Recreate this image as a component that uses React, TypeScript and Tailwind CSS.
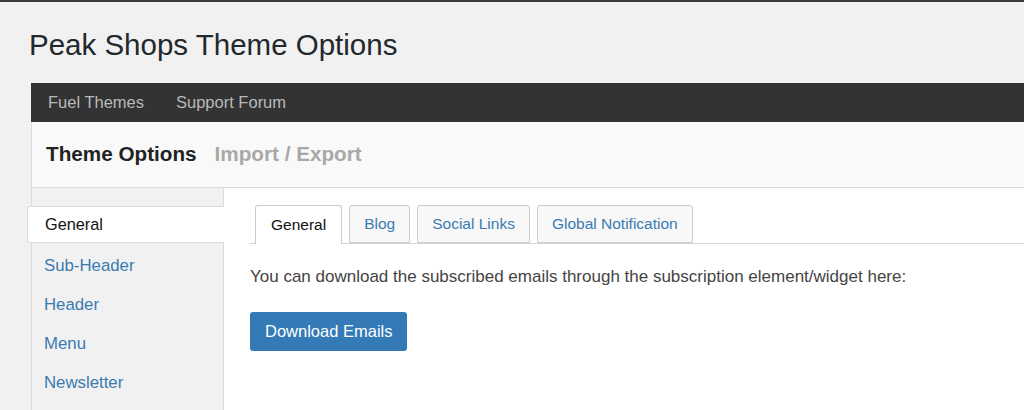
const sideItems = ['Sub-Header', 'Header', 'Menu', 'Newsletter'];
const tabs = ['Blog', 'Social Links', 'Global Notification'];

export default function App() {
  return (
    <div className="min-h-screen bg-[#f1f1f1] border-t-2 border-[#3c3c3c] font-['Liberation_Sans',Arial,sans-serif] overflow-hidden">
      <h1 className="pl-[29px] pt-[25px] h-[81px] text-[29.5px] leading-[36px] text-[#23282d]">
        Peak Shops Theme Options
      </h1>

      <div className="ml-[31px]">
        <div className="h-[39px] bg-[#333] flex items-center gap-[32px] pl-[17px] text-[16.5px] text-[#b9b9b9]">
          <span>Fuel Themes</span>
          <span>Support Forum</span>
        </div>

        <div className="h-[66px] bg-[#f9f9f9] border-l border-b border-[#dcdcdc] flex items-center gap-[18px] pl-[14px] text-[20.7px] pb-[2px]">
          <span className="font-bold text-[#222]">Theme Options</span>
          <span className="font-bold text-[#a8a8a8]">Import / Export</span>
        </div>

        <div className="flex">
          <div className="w-[193px] shrink-0 bg-[#f1f1f1] border-l border-r border-[#dcdcdc] pt-[18px] h-[300px]">
            <div className="-ml-[5px] -mr-px h-[37px] bg-white border border-r-0 border-[#dcdcdc] rounded-l-[3px] flex items-center pl-[17px] text-[16.3px] text-[#111]">
              General
            </div>
            {sideItems.map((s) => (
              <div key={s} className="h-[39px] flex items-center pl-[12px] pt-[6px] text-[16.8px] text-[#3a7bb0]">
                {s}
              </div>
            ))}
          </div>

          <div className="flex-1 bg-white pt-[17px] pl-[26px]">
            <div className="flex gap-[7px] pl-[5px] border-b border-[#d4d4d4] h-[39px]">
              <div className="h-[39px] px-[15px] flex items-center bg-white border border-b-0 border-[#ccc] rounded-t-[3px] text-[15.5px] text-[#111]">
                General
              </div>
              {tabs.map((t) => (
                <div key={t} className="h-[38px] px-[14px] flex items-center bg-[#f8f8f8] border border-[#ccc] rounded-t-[3px] text-[15.5px] text-[#3a7bb0]">
                  {t}
                </div>
              ))}
            </div>

            <p className="mt-[22px] text-[17px] leading-[22px] text-[#444]">
              You can download the subscribed emails through the subscription element/widget here:
            </p>

            <button className="mt-[24px] h-[39px] px-[15px] bg-[#337ab7] rounded-[3px] text-white text-[16.5px]">
              Download Emails
            </button>
          </div>
        </div>
      </div>
    </div>
  );
}
